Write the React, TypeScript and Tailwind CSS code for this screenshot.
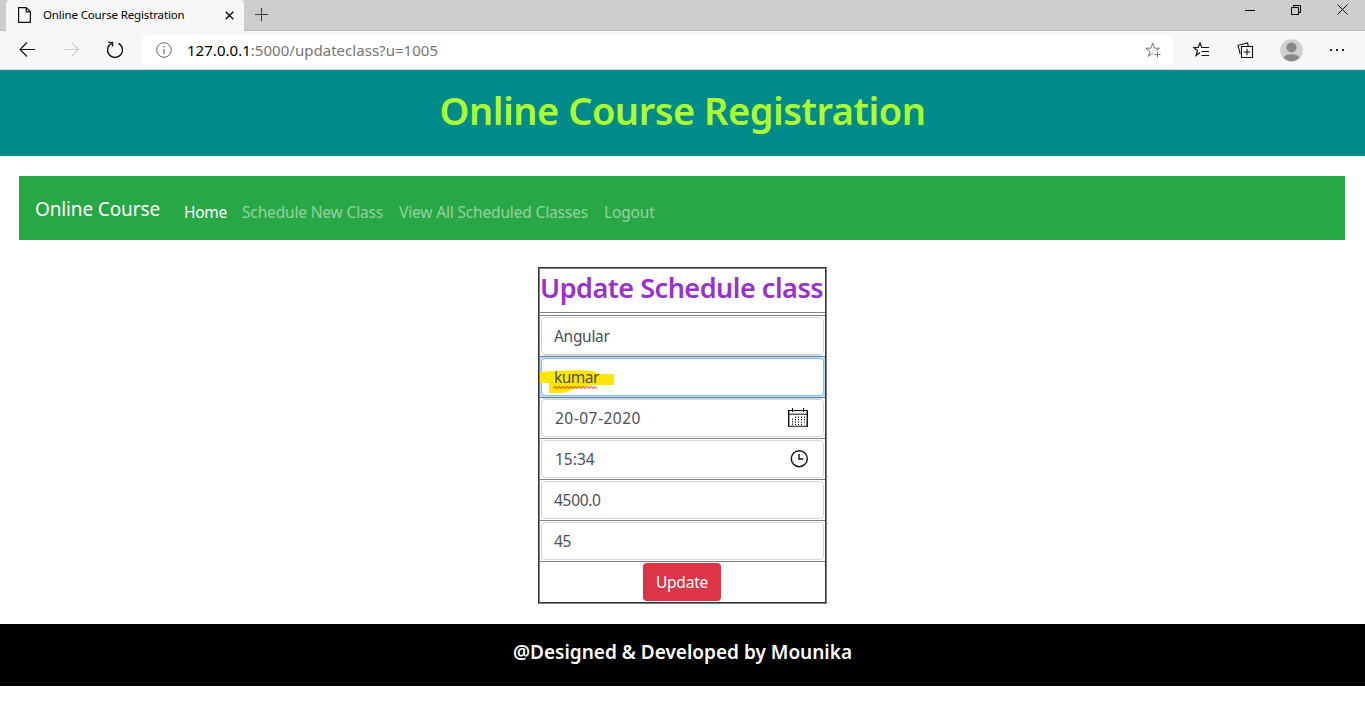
import React from "react";

const ui = "font-['Noto_Sans',sans-serif]";

function TabStrip() {
  return (
    <div className="flex h-[31px] bg-[#cdcdcd] shadow-[inset_0_-1px_0_#bdbdbd]">
      <div className="ml-[6px] flex h-[31px] w-[238px] items-center rounded-t-[4px] bg-[#f7f7f7] pl-[12px]">
        <svg className="relative -top-px" width="13" height="16" viewBox="0 0 13 16" fill="none" stroke="#111" strokeWidth="1.2">
          <path d="M.6.6h7.6l4.2 4.2v10.6H.6zM8.2.6v4.2h4.2" />
        </svg>
        <span className="relative -top-px ml-[12px] w-[142px] whitespace-nowrap text-[11.5px] leading-4 tracking-[-0.14px] text-black">Online Course Registration</span>
        <svg className="ml-[40px]" width="9" height="9" viewBox="0 0 9 9" stroke="#111" strokeWidth="1.5">
          <path d="M.7.7l7.6 7.6M8.3.7L.7 8.3" />
        </svg>
      </div>
      <svg className="ml-[11px] mt-2" width="13" height="13" viewBox="0 0 13 13" stroke="#333" strokeWidth="1">
        <path d="M6.5 0v13M0 6.5h13" />
      </svg>
      <div className="ml-auto flex h-[21px] items-center pr-[17px]">
        <svg width="10" height="10" viewBox="0 0 10 10" stroke="#000"><path d="M0 4.500h10" /></svg>
        <svg className="relative -top-px ml-[36px]" width="10" height="10" viewBox="0 0 10 10" stroke="#000" fill="none">
          <path d="M.5 2.5h7v7h-7zM2.5 2.5v-2h7v7h-2" />
        </svg>
        <svg className="relative -top-px ml-[36px]" width="11" height="11" viewBox="0 0 11 11" stroke="#111"><path d="M.5.5l10 10M10.5.5l-10 10" /></svg>
      </div>
    </div>
  );
}

function Toolbar() {
  return (
    <div className="flex h-[39px] items-center border-b border-[#d8d8d8] bg-[#f7f7f7]">
      <svg className="ml-[19px]" width="17" height="16" viewBox="0 0 17 16" fill="none" stroke="#111" strokeWidth="1.2">
        <path d="M16 7.500H1M8 .5L1 7.500l7 7" />
      </svg>
      <svg className="ml-[27px]" width="17" height="16" viewBox="0 0 17 16" fill="none" stroke="#cfcfcf" strokeWidth="1.2">
        <path d="M0 7.500h15M8.500.5l7 7-7 7" />
      </svg>
      <svg className="ml-[26px]" width="18" height="18" viewBox="0 0 18 18" fill="none" stroke="#111" strokeWidth="1.4">
        <path d="M12.500 2.300A7.500 7.500 0 1 1 6 2.100M2.300 1.400h4.200v4.200" />
      </svg>
      <div className="ml-[18px] flex h-[30px] w-[1031px] items-center rounded-[4px] bg-white">
        <svg className="ml-[14px]" width="16" height="16" viewBox="0 0 16 16" fill="none" stroke="#666">
          <circle cx="8" cy="8" r="7.300" /><path d="M8 7v5M8 4v1.400" strokeWidth="1.200" />
        </svg>
        <span className="ml-[15px] whitespace-nowrap text-[15px] leading-5 tracking-[0.03px] text-[#767676]">
          <span className="text-black">127.0.0.1</span>:5000/updateclass?u=1005
        </span>
        <svg className="ml-auto mr-[11px]" width="17" height="16" viewBox="0 0 17 16" fill="none" stroke="#777">
          <path d="M11 8.700l3.500-2.500H9.500L7.700 1 5.900 6.200H.8L5 9.400l-1.600 5 4.300-3.100M12.500 9.500v6M9.500 12.500h6" />
        </svg>
      </div>
      <svg className="ml-[20px]" width="17" height="16" viewBox="0 0 17 16" fill="none" stroke="#111" strokeWidth="1.200">
        <path d="M10 5.500H8.700L7 .9 5.300 5.500H.9l3.500 3-1.300 5L7 10.500M8.500 5.500H16M8.500 9.500H16M8.500 13.500H16" />
      </svg>
      <svg className="ml-[27px]" width="17" height="16" viewBox="0 0 17 16" fill="none" stroke="#111" strokeWidth="1.100">
        <path d="M4.500 4.500h11v11h-11zM10 6.700v6.600M6.700 10h6.600M3.200 11.800L1 3.300 10.500 1l.8 3.200" />
      </svg>
      <svg className="ml-[26px]" width="23" height="23" viewBox="0 0 23 23">
        <circle cx="11.500" cy="11.500" r="11.300" fill="#d2d0ce" />
        <circle cx="11.500" cy="8.500" r="5" fill="#8a8886" />
        <path d="M3.500 18.500C5.500 14 17.500 14 19.500 18.500Q11.500 26 3.500 18.500Z" fill="#8a8886" />
      </svg>
      <svg className="ml-[26px]" width="16" height="4" viewBox="0 0 16 4" fill="#222">
        <path d="M1 1h2v2H1zM7 1h2v2H7zM13 1h2v2h-2z" />
      </svg>
    </div>
  );
}

function CalendarIcon() {
  return (
    <svg className="relative -top-[2px]" width="20" height="19" viewBox="0 0 20 19" fill="none" stroke="#111">
      <path d="M0 2.500h20M0 18.250h20" strokeWidth="1.200" />
      <path d="M.7 2.500v16M19.300 2.500v16" strokeWidth="1.400" />
      <path d="M.5 6.200h19M4.500 0v4M15.500 0v4" />
      <path d="M4.500 10.500v6.500M7.500 8.500v8.500M10.500 8.500v8.500M13.500 8.500v8.500M16.500 8.500v6" strokeDasharray="1.300 1.200" />
    </svg>
  );
}

function ClockIcon() {
  return (
    <svg className="relative -top-px" width="18" height="18" viewBox="0 0 18 18" fill="none" stroke="#111" strokeWidth="1.400">
      <circle cx="9.300" cy="8.700" r="8" /><path d="M9 4v5h4.300" />
    </svg>
  );
}

function Row({ children }: { children: React.ReactNode }) {
  return <div className="h-[41px] px-px pt-px">{children}<div className="relative z-10 -mx-px mt-px h-px bg-[#808080]" /></div>;
}

const field = "flex h-[38px] items-center rounded-[4px] border bg-white pl-[12px] pt-[2px] text-[15.5px] tracking-[-0.3px] text-[#495057]";

export default function App() {
  return (
    <div className={`${ui} h-[724px] w-[1365px] overflow-hidden bg-white`}>
      <TabStrip />
      <Toolbar />
      <header className="h-[86px] bg-[#008b8b] pt-[16px] text-center">
        <h1 className="whitespace-nowrap text-[38px] font-semibold leading-[48px] tracking-[-0.48px] text-[#adff2f]">Online Course Registration</h1>
      </header>
      <nav className="mx-[19px] mt-5 flex h-16 w-[1326px] whitespace-nowrap bg-[#28a745] px-4 text-[15.5px] tracking-[-0.16px]">
        <span className="mt-[18px] w-[149px] text-[19px] leading-[30px] tracking-[-0.13px] text-white">Online Course</span>
        <span className="mt-6 w-[58px] leading-6 tracking-[-0.3px] text-white">Home</span>
        <span className="mt-6 w-[157px] leading-6 text-white/50">Schedule New Class</span>
        <span className="mt-6 w-[205px] leading-6 text-white/50">View All Scheduled Classes</span>
        <span className="mt-6 leading-6 text-white/50">Logout</span>
      </nav>
      <main className="ml-[538px] mt-[27px] h-[337px] w-[289px] border border-t-[#333] border-r-[#808080] border-b-[#808080] border-l-[#333]">
        <div className="h-full overflow-hidden border border-t-[#808080] border-r-[#333] border-b-[#333] border-l-[#808080]">
          <h2 className="h-[43px] whitespace-nowrap text-[27px] font-semibold leading-[38px] tracking-[-0.48px] text-[#9932cc]">Update Schedule class</h2>
          <div className="h-1 border-y border-[#808080]" />
          <Row><div className={`${field} border-[#ced4da]`}>Angular</div></Row>
          <Row>
            <div className={`${field} relative border-[#80bdff] shadow-[0_0_0_3px_#bfdeff]`}>
              <svg className="absolute left-[-2px] top-[11px]" width="75" height="25" viewBox="0 0 75 25" fill="#ffe600">
                <path d="M0 2Q35-1 53 1L60 4H74V15H58Q48 15 44 17Q32 18 28 22Q18 24 9 23V13H0Z" />
              </svg>
              <span className="relative tracking-[-0.5px]">
                kumar
                <svg className="absolute bottom-px left-[-1px]" width="46" height="3" viewBox="0 0 46 3" fill="none" stroke="#f00">
                  <path d="M0 2.500l2-2 2 2 2-2 2 2 2-2 2 2 2-2 2 2 2-2 2 2 2-2 2 2 2-2 2 2 2-2 2 2 2-2 2 2 2-2 2 2 2-2 2 2" />
                </svg>
              </span>
            </div>
          </Row>
          <Row><div className={`${field} justify-between border-[#ced4da] pr-[15px]`}><span className="pl-px tracking-[0.5px]">20-07-2020</span><CalendarIcon /></div></Row>
          <Row><div className={`${field} justify-between border-[#ced4da] pr-[15px]`}><span className="pl-px tracking-[0px]">15:34</span><ClockIcon /></div></Row>
          <Row><div className={`${field} border-[#ced4da]`}>4500.0</div></Row>
          <Row><div className={`${field} border-[#ced4da]`}>45</div></Row>
          <div className="flex pl-[103px] pt-px">
            <button className="h-[38px] w-[78px] rounded-[4px] bg-[#dc3545] pt-[2px] text-[15.5px] tracking-[-0.2px] text-white">Update</button>
          </div>
        </div>
      </main>
      <footer className="mt-5 h-[62px] bg-black pt-4 text-center text-[19px] font-semibold leading-6 text-white">@Designed &amp; Developed by Mounika</footer>
    </div>
  );
}
